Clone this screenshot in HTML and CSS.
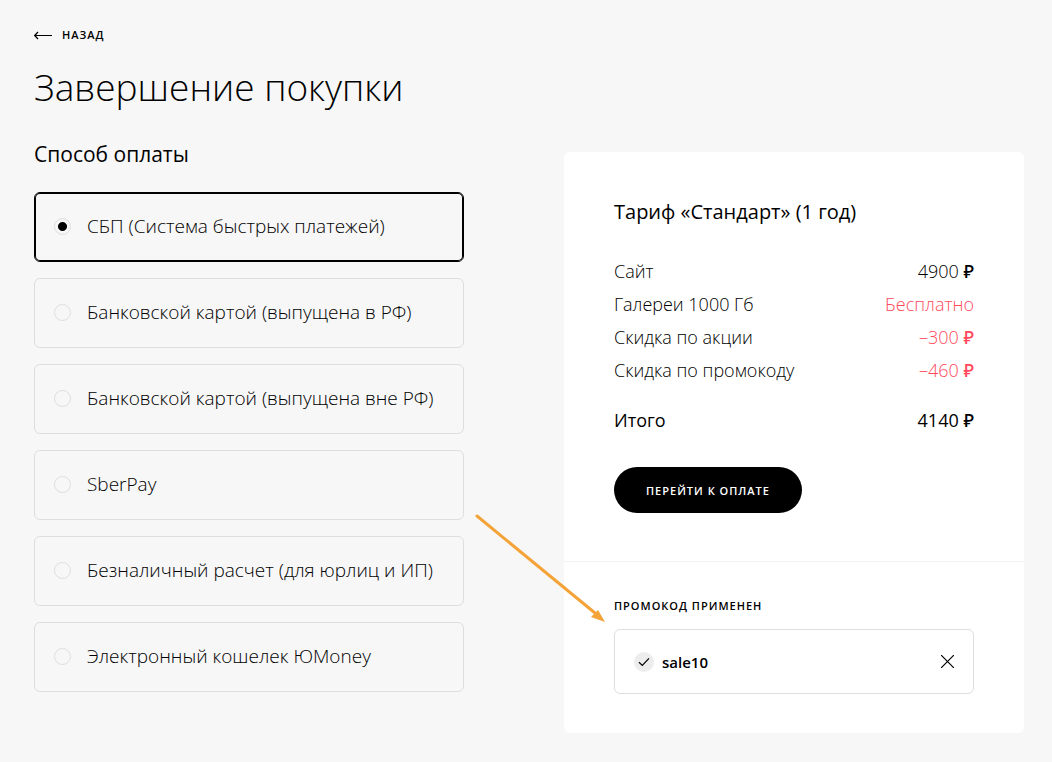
FILE: index.html
```html
<!DOCTYPE html>
<html lang="ru">
<head>
    <meta charset="UTF-8">
    <meta name="viewport" content="width=device-width, initial-scale=1">
    <title>Завершение покупки</title>
    <link rel="stylesheet" href="styles.css">
</head>
<body>
    <main class="checkout">
        <a class="back" href="#">
            <svg class="back-icon" width="18" height="9" viewBox="0 0 18 9" fill="none" stroke="currentColor" stroke-width="1.2" aria-hidden="true">
                <path d="M18 4.5H.7M4 1 .7 4.5 4 8"/>
            </svg>
            Назад
        </a>
        <h1>Завершение покупки</h1>

        <div class="columns">
            <form class="payment" id="payment">
                <fieldset class="methods">
                    <legend>Способ оплаты</legend>
                    <label class="method"><input type="radio" name="method" value="sbp" checked> СБП (Система быстрых платежей)</label>
                    <label class="method"><input type="radio" name="method" value="card-ru"> Банковской картой (выпущена в РФ)</label>
                    <label class="method"><input type="radio" name="method" value="card-world"> Банковской картой (выпущена вне РФ)</label>
                    <label class="method"><input type="radio" name="method" value="sberpay"> SberPay</label>
                    <label class="method"><input type="radio" name="method" value="invoice"> Безналичный расчет (для юрлиц и ИП)</label>
                    <label class="method"><input type="radio" name="method" value="yoomoney"> Электронный кошелек ЮMoney</label>
                </fieldset>
            </form>

            <aside class="summary">
                <section class="order">
                    <h2>Тариф «Стандарт» (1 год)</h2>
                    <table class="prices">
                        <tbody>
                            <tr><th scope="row">Сайт</th><td>4900 <span class="ruble">₽</span></td></tr>
                            <tr><th scope="row">Галереи 1000 Гб</th><td class="discount">Бесплатно</td></tr>
                            <tr><th scope="row">Скидка по акции</th><td class="discount">–300 <span class="ruble">₽</span></td></tr>
                            <tr><th scope="row">Скидка по промокоду</th><td class="discount">–460 <span class="ruble">₽</span></td></tr>
                        </tbody>
                        <tfoot>
                            <tr><th scope="row">Итого</th><td>4140 <span class="ruble">₽</span></td></tr>
                        </tfoot>
                    </table>
                    <button class="pay" type="submit" form="payment">Перейти к оплате</button>
                </section>

                <section class="promo">
                    <h3>Промокод применен</h3>
                    <div class="promo-code">
                        <svg class="promo-check" width="20" height="20" viewBox="0 0 20 20" fill="none" aria-hidden="true">
                            <circle cx="10" cy="10" r="10" fill="#ededed"/>
                            <path d="M5 10.3 8.3 13.5 15 6.3" stroke="#000" stroke-width="1.2"/>
                        </svg>
                        <span>sale10</span>
                        <button class="promo-remove" type="button" aria-label="Удалить промокод">
                            <svg width="13" height="13" viewBox="0 0 13 13" stroke="currentColor" stroke-width="1.2" aria-hidden="true">
                                <path d="M0 0 13 13M13 0 0 13"/>
                            </svg>
                        </button>
                    </div>
                    <svg class="pointer" width="130" height="108" viewBox="0 0 130 108" aria-hidden="true">
                        <path d="M2 2 120 99" stroke="#f4a338" stroke-width="3" stroke-linecap="round"/>
                        <path d="M130 108 123 96 116 103Z" fill="#f4a338"/>
                    </svg>
                </section>
            </aside>
        </div>
    </main>
</body>
</html>
```

FILE: styles.css
```css
* {
    box-sizing: border-box;
}
body {
    margin: 0;
    background: #f7f7f7;
    color: #000;
    font-family: "Open Sans", "Noto Sans", sans-serif;
    font-size: 18px;
    font-weight: 300;
    line-height: 24px;
}
h1, h2, h3 {
    margin: 0;
}
button {
    font-family: inherit;
    cursor: pointer;
}
.checkout {
    padding: 27px 28px 28px 34px;
}
.back {
    display: flex;
    align-items: center;
    gap: 10px;
    width: fit-content;
    color: #000;
    font-size: 11px;
    font-weight: 600;
    line-height: 16px;
    letter-spacing: 1px;
    text-transform: uppercase;
    text-decoration: none;
}
h1 {
    margin-top: 20px;
    font-size: 37px;
    font-weight: 300;
    line-height: 48px;
}
.columns {
    display: grid;
    grid-template-columns: 43fr 46fr;
    column-gap: 100px;
    align-items: start;
    margin-top: 29px;
}

/* Payment methods */
.methods {
    display: flex;
    flex-direction: column;
    gap: 16px;
    min-width: 0;
    margin: 0;
    padding: 0;
    border: 0;
}
.methods legend {
    margin-bottom: 24px;
    padding: 0;
    font-size: 21px;
    font-weight: 400;
    line-height: 28px;
}
.method {
    display: flex;
    align-items: center;
    gap: 16px;
    min-height: 70px;
    padding: 0 19px 2px;
    border: 1px solid #dedede;
    border-radius: 6px;
    font-size: 19px;
    cursor: pointer;
}
.method:has(input:checked) {
    border-color: #000;
    box-shadow: inset 0 0 0 1px #000;
}
.method input {
    appearance: none;
    flex: none;
    width: 17px;
    height: 17px;
    margin: 0;
    border: 1px solid #dedede;
    border-radius: 50%;
}
.method input:checked {
    background: radial-gradient(circle, #000 4px, transparent 5px);
}

/* Order summary */
.summary {
    margin-top: 12px;
    background: #fff;
    border-radius: 6px;
}
.order {
    padding: 46px 50px 48px;
    border-bottom: 1px solid #f2f2f2;
}
.order h2 {
    font-size: 20px;
    font-weight: 400;
    line-height: 28px;
}
.prices {
    width: 100%;
    margin: 28px 0 31px;
    border-collapse: collapse;
}
.prices th,
.prices td {
    height: 33px;
    padding: 0;
    font-weight: inherit;
    text-align: left;
}
.prices td {
    text-align: right;
}
.prices tfoot {
    font-weight: 400;
}
.prices tfoot th,
.prices tfoot td {
    height: 50px;
    padding-top: 17px;
}
.prices .discount {
    color: #ff4a5c;
}
.ruble {
    font-weight: 500;
}
.pay {
    height: 46px;
    padding: 0 32px;
    border: 0;
    border-radius: 23px;
    background: #000;
    color: #fff;
    font-size: 11px;
    font-weight: 600;
    letter-spacing: 1px;
    text-transform: uppercase;
}

/* Promo code */
.promo {
    position: relative;
    padding: 36px 50px 39px;
}
.promo h3 {
    margin-bottom: 15px;
    font-size: 11px;
    font-weight: 600;
    line-height: 16px;
    letter-spacing: 1px;
    text-transform: uppercase;
}
.promo-code {
    display: flex;
    align-items: center;
    gap: 8px;
    min-height: 65px;
    padding: 0 19px;
    border: 1px solid #dedede;
    border-radius: 6px;
    font-size: 15px;
    font-weight: 600;
}
.promo-remove {
    display: flex;
    margin-left: auto;
    padding: 0;
    border: 0;
    background: none;
    color: #000;
}
.pointer {
    position: absolute;
    top: -48px;
    left: -89px;
    pointer-events: none;
}
```
